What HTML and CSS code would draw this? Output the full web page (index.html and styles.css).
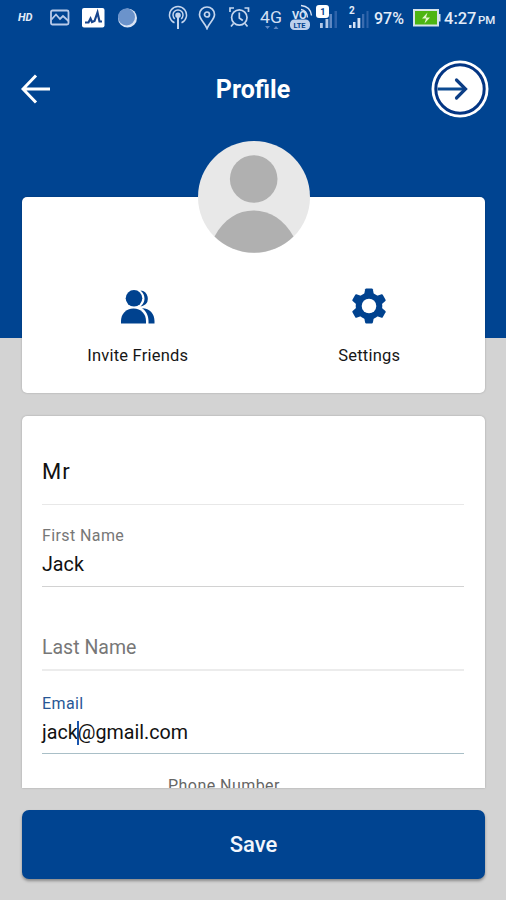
FILE: index.html
```
<!DOCTYPE html>
<html lang="en">
<head>
<meta charset="utf-8">
<title>Profile</title>
<link rel="stylesheet" href="styles.css">
</head>
<body>
<div class="screen">
  <div class="status">
    <span class="hd">HD</span>
    <svg width="20" height="18" viewBox="0 0 20 18" fill="none" stroke="#b9cbe9" stroke-width="1.8"><rect x="1" y="1.5" width="17.5" height="14" rx="1.5"/><path d="M1.500 10.500L6 5.500l4 4.500 3-3 5.500 5"/></svg>
    <svg width="23" height="20" viewBox="0 0 23 20"><rect width="22.500" height="19.500" rx="2" fill="#fff"/><path d="M3 14.500h3.500l2-4 1.500 3.500 2.500-1 3-8.500 2 9h2.500" fill="none" stroke="#17458d" stroke-width="2.200"/></svg>
    <svg width="21" height="20" viewBox="0 0 21 20"><circle cx="10.500" cy="10" r="9.500" fill="#d9e4f5"/><circle cx="9.500" cy="9" r="8.500" fill="#6b93cb"/></svg>
    <svg width="20" height="25" viewBox="0 0 20 25" fill="none" stroke="#c5d6ee" stroke-width="1.500"><path d="M6.500 17.800a8.500 8.500 0 1 1 7 0M6.800 13.800a5 5 0 1 1 6.400 0"/><circle cx="10" cy="10.200" r="2" fill="#c5d6ee"/><path d="M10 10v14" stroke-width="2"/></svg>
    <svg width="18" height="24" viewBox="0 0 18 24" fill="none" stroke="#c5d6ee" stroke-width="1.700"><path d="M9 22.500C7 17 1.500 13.500 1.500 8.500a7.500 7.500 0 0 1 15 0C16.500 13.500 11 17 9 22.500z"/><circle cx="9" cy="8.500" r="2.500"/></svg>
    <svg width="21" height="21" viewBox="0 0 21 21" fill="none" stroke="#c5d6ee" stroke-width="1.700"><circle cx="10.300" cy="10.500" r="7.700"/><path d="M10.300 5.500v5.500l3.500 2.500M1 5V1h4M15.500 1h4v4M4.500 16.500l-2.500 3M16 16.500l2.500 3"/></svg>
    <svg class="net-icon" width="24" height="26" viewBox="0 0 24 26"><text x="0" y="18" class="net" textLength="22" lengthAdjust="spacingAndGlyphs">4G</text><path d="M5 21h5l-2.500 3zM13.500 24l2.500-3 2.500 3z" fill="#5e87c1"/></svg>
    <svg class="volte" width="24" height="28" viewBox="0 0 24 28"><text x="2" y="14.500" class="vo">VO</text><g fill="none" stroke="#d6e2f4" stroke-width="1.400"><path d="M11 5.500q6 1 6.500 8M11 1.500q9.500 1 10.500 10"/></g><rect x="0" y="15.500" width="20" height="10.500" rx="4.500" fill="#bdd0ec"/><text x="3.500" y="23.800" class="lte">LTE</text></svg>
    <svg width="26" height="26" viewBox="0 0 26 26"><rect x="9.500" y="14" width="2.800" height="9" fill="#b3c9e8"/><rect x="4" y="18" width="2.800" height="5" fill="#b3c9e8"/><rect x="13.500" y="9" width="2.500" height="14" fill="#5f88c2"/><rect x="18.500" y="6" width="2.500" height="17" fill="#2d62a9"/><rect width="13" height="13" rx="3" fill="#fff"/><text x="4.300" y="10" class="sim1">1</text></svg>
    <svg width="24" height="26" viewBox="0 0 24 26"><text x="1" y="9" class="sim2">2</text><rect x="1" y="20" width="2.500" height="3" fill="#d6e2f4"/><rect x="5" y="17" width="2.500" height="6" fill="#d6e2f4"/><rect x="9.500" y="13" width="2.800" height="10" fill="#d6e2f4"/><rect x="14" y="9" width="2.300" height="14" fill="#3a6caf"/><rect x="18.500" y="6" width="2" height="17" fill="#2d62a9"/></svg>
    <span class="pct">97%</span>
    <svg width="28" height="18" viewBox="0 0 28 18"><rect x="1" y="1" width="24" height="15.500" fill="#4db512" stroke="#d7e4ea" stroke-width="2"/><rect x="25.500" y="5" width="2" height="7.500" fill="#d7e4ea"/><path d="M14.500 3.500L9 9.500h4l-1.500 5 5.500-6h-4z" fill="#e5f5cf"/></svg>
    <span class="time">4:27</span>
    <span class="pm">PM</span>
  </div>

  <header class="bar">
    <svg width="30" height="30" viewBox="0 0 30 30" fill="none" stroke="#fff" stroke-width="3"><path d="M15 1.500L2 15l13 13.500M2.500 15H29"/></svg>
    <h1>Profile</h1>
    <svg width="58" height="58" viewBox="0 0 58 58"><circle cx="29" cy="29" r="28.500" fill="#fff"/><circle cx="29" cy="29" r="24.200" fill="none" stroke="#033583" stroke-width="3"/><path d="M6.500 29H33" stroke="#0c4a91" stroke-width="3" fill="none"/><path d="M25.500 20l9 9-9 9" fill="none" stroke="#0c3d85" stroke-width="3.200" stroke-linecap="round"/></svg>
  </header>

  <section class="card summary">
    <svg class="avatar" viewBox="0 0 112 112"><circle cx="56" cy="56" r="56" fill="#e8e8e8"/><circle cx="55.700" cy="38" r="23.800" fill="#b0b0b0"/><path d="M16.500 95.500C26 78 40 69.500 55.500 69.500S86 78 95.500 95.500A56 56 0 0 1 16.500 95.500z" fill="#b0b0b0"/></svg>
    <div class="action">
      <svg width="36" height="36" viewBox="0 0 36 36" fill="#00428f"><path d="M20.500 2.500a8 8 0 0 1 3.500 14.800q-1.500 1-3.500 1.200 4-3.500 4-8t-4-8z"/><circle cx="14" cy="10.300" r="8.300"/><path d="M1 35.500v-2.500C1 26 6 20.500 13.500 20.500S26 26 26 33v2.500z"/><path d="M22 20.300C30 20.500 34.500 26 34.500 33v2.500h-6V33c0-5.500-2.500-10-6.500-12.700z"/></svg>
      <span>Invite Friends</span>
    </div>
    <div class="action">
      <svg width="36" height="36" viewBox="0 0 36 36"><g fill="#00428f"><circle cx="18" cy="18" r="13.300"/><path id="tooth" d="M12.800 8l1.400-6.700q.2-.8 1-.8h5.600q.8 0 1 .8L23.200 8z"/><use href="#tooth" transform="rotate(60 18 18)"/><use href="#tooth" transform="rotate(120 18 18)"/><use href="#tooth" transform="rotate(180 18 18)"/><use href="#tooth" transform="rotate(240 18 18)"/><use href="#tooth" transform="rotate(300 18 18)"/></g><circle cx="18" cy="18" r="7.300" fill="#fff"/></svg>
      <span>Settings</span>
    </div>
  </section>

  <section class="card form">
    <div class="field title"><span class="value">Mr</span></div>
    <div class="field first"><span class="label">First Name</span><span class="value">Jack</span></div>
    <div class="field last"><span class="hint">Last Name</span></div>
    <div class="field email"><span class="label">Email</span><span class="value">jack<i class="caret"></i>@gmail.com</span></div>
    <div class="phone">Phone Number</div>
  </section>

  <button class="save">Save</button>
</div>
</body>
</html>
```
FILE: styles.css
```
* { box-sizing: border-box; }
body { margin: 0; font-family: Roboto, "Liberation Sans", sans-serif; }
svg { display: block; flex: none; }
.screen {
  width: 506px;
  height: 900px;
  overflow: hidden;
  display: flex;
  flex-direction: column;
  background: linear-gradient(#004491 338px, #d3d3d3 338px);
}
.status {
  height: 35px;
  padding-left: 18px;
  display: grid;
  grid-template-columns: 32px 32px 35px 51px 30px 31px 31px 30px 26px 32px 26px 39px 31px 34px 28px;
  align-items: center;
  color: #e3ecf8;
  white-space: nowrap;
}
.hd { font-size: 11px; font-weight: 700; font-style: italic; }
.net-icon { align-self: start; margin-top: 5px; }
.net { font-size: 17px; fill: #d2dff2; }
.volte { align-self: start; margin-top: 4px; }
.vo { font-size: 11px; font-weight: 700; fill: #d6e2f4; }
.lte { font-size: 7.500px; font-weight: 700; fill: #00428f; }
.sim1 { font-size: 9px; font-weight: 700; fill: #00428f; }
.sim2 { font-size: 10px; font-weight: 700; fill: #e3ecf8; }
.pct { font-size: 16px; font-weight: 500; padding-top: 1px; }
.time { font-size: 16.500px; font-weight: 500; padding-top: 1px; }
.pm { font-size: 11.500px; font-weight: 500; padding-top: 4px; }

.bar {
  height: 108px;
  padding: 0 17px 0 21px;
  display: grid;
  grid-template-columns: 1fr auto 1fr;
  align-items: center;
}
.bar > :last-child { justify-self: end; }
.bar h1 { margin: 2px 4px 0 0; font-size: 25px; line-height: 30px; color: #fff; }

.card {
  margin: 0 21px 0 22px;
  background: #fff;
  border-radius: 5px;
  box-shadow: 0 0 2px rgba(0, 0, 0, .25);
}
.summary {
  position: relative;
  flex: none;
  margin-top: 54px;
  height: 196px;
  padding-top: 91px;
  display: grid;
  grid-template-columns: 1fr 1fr;
}
.avatar {
  position: absolute;
  left: 176px;
  top: -56px;
  width: 112px;
  height: 112px;
}
.action {
  display: flex;
  flex-direction: column;
  align-items: center;
  gap: 22px;
  font-size: 16.500px;
  letter-spacing: .2px;
  line-height: 20px;
  color: #161616;
}
.form {
  flex: none;
  margin-top: 23px;
  height: 372px;
  padding: 0 21px 0 20px;
  overflow: hidden;
  border-radius: 5px 5px 0 0;
}
.field {
  display: flex;
  flex-direction: column;
  justify-content: flex-end;
  border-bottom: 1px solid #d2d2d2;
}
.value { font-size: 19.700px; line-height: 24px; color: #111; }
.label { font-size: 16px; letter-spacing: .4px; line-height: 20px; color: #777; }
.title { height: 89px; padding-bottom: 20px; border-color: #e8e8e8; }
.title .value { font-size: 22px; letter-spacing: 1px; }
.first { height: 82px; padding-bottom: 9px; gap: 7px; }
.last { height: 84px; padding-bottom: 9px; border-bottom: 2px solid #ececec; }
.hint { font-size: 19.500px; line-height: 24px; color: #777; }
.email { height: 83px; padding-bottom: 8px; gap: 7px; border-color: #a9bfc7; }
.email .label { color: #275796; }
.caret {
  display: inline-block;
  width: 2px;
  height: 24px;
  margin: 0 -1px;
  vertical-align: -6px;
  background: #1a56ae;
}
.phone { padding: 22px 0 0 126px; font-size: 16px; letter-spacing: .45px; line-height: 20px; color: #666; }
.save {
  flex: none;
  margin: 22px 21px 0 22px;
  height: 69px;
  border: 0;
  border-radius: 7px;
  background: #004491;
  color: #f2f6fc;
  font: 500 22px Roboto, "Liberation Sans", sans-serif;
  box-shadow: 0 2px 3px rgba(0, 0, 0, .35);
}
```
